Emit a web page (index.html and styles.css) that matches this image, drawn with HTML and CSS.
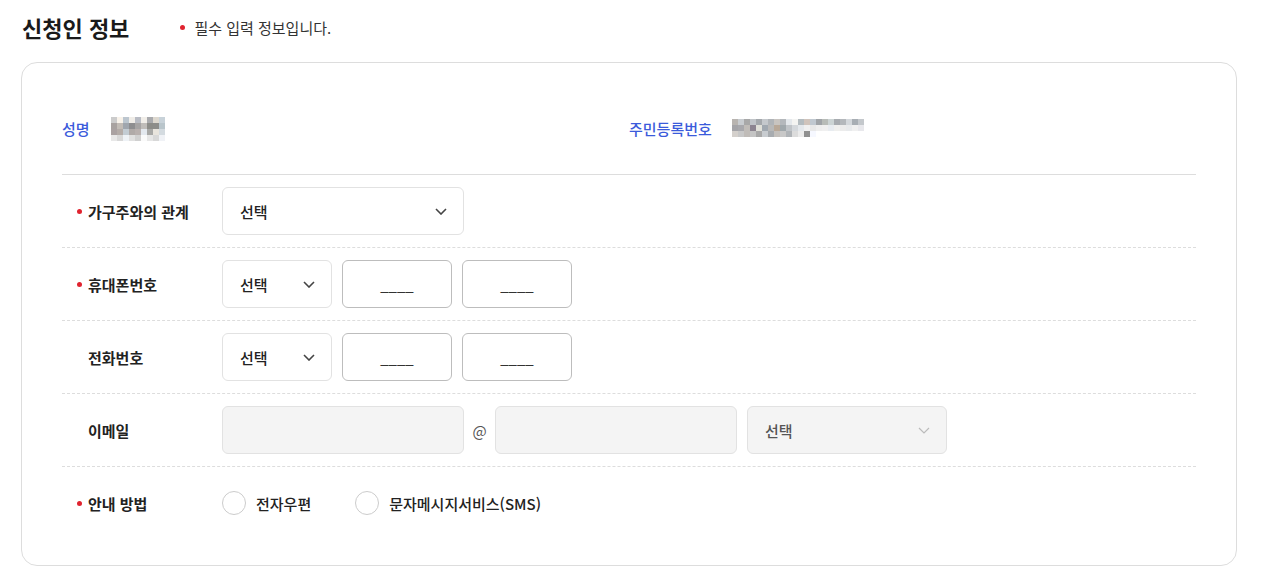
FILE: index.html
```html
<!DOCTYPE html>
<html lang="ko">
<head>
<meta charset="utf-8">
<title>신청인 정보</title>
<link rel="stylesheet" href="styles.css">
</head>
<body>
<div class="header">
  <h2 class="title">신청인 정보</h2>
  <p class="notice"><span class="dot"></span>필수 입력 정보입니다.</p>
</div>
<div class="card">
  <div class="info-row">
    <div class="info">
      <span class="info-label name-label">성명</span>
      <svg class="mosaic" width="54" height="24" viewBox="0 0 54 24">
        <rect x="0" y="0" width="6" height="6" fill="#cccccc"/><rect x="6" y="0" width="6" height="6" fill="#f8f2ea"/><rect x="12" y="0" width="6" height="6" fill="#bcc6cf"/><rect x="18" y="0" width="6" height="6" fill="#f0ede8"/><rect x="24" y="0" width="6" height="6" fill="#b9bcc4"/><rect x="30" y="0" width="6" height="6" fill="#f1eee9"/><rect x="36" y="0" width="6" height="6" fill="#a9aaad"/><rect x="42" y="0" width="6" height="6" fill="#ddd8cf"/><rect x="48" y="0" width="6" height="6" fill="#c8d2d9"/>
        <rect x="0" y="6" width="6" height="6" fill="#a8a2a0"/><rect x="6" y="6" width="6" height="6" fill="#c2bcb6"/><rect x="12" y="6" width="6" height="6" fill="#a0a6ae"/><rect x="18" y="6" width="6" height="6" fill="#8e8e90"/><rect x="24" y="6" width="6" height="6" fill="#a6a4a4"/><rect x="30" y="6" width="6" height="6" fill="#bfbcb9"/><rect x="36" y="6" width="6" height="6" fill="#8c8c88"/><rect x="42" y="6" width="6" height="6" fill="#8d8d8a"/><rect x="48" y="6" width="6" height="6" fill="#b9c5cb"/>
        <rect x="0" y="12" width="6" height="6" fill="#aaa2a2"/><rect x="6" y="12" width="6" height="6" fill="#b4aca8"/><rect x="12" y="12" width="6" height="6" fill="#c3ccd3"/><rect x="18" y="12" width="6" height="6" fill="#b0aaa8"/><rect x="24" y="12" width="6" height="6" fill="#b8b0ae"/><rect x="30" y="12" width="6" height="6" fill="#e3e8ee"/><rect x="36" y="12" width="6" height="6" fill="#a8a8a6"/><rect x="42" y="12" width="6" height="6" fill="#e8e4dd"/><rect x="48" y="12" width="6" height="6" fill="#d4dbe0"/>
        <rect x="0" y="18" width="6" height="6" fill="#e8e8e8"/><rect x="6" y="18" width="6" height="6" fill="#d8d8d8"/><rect x="12" y="18" width="6" height="6" fill="#eef2f6"/><rect x="18" y="18" width="6" height="6" fill="#e0e0e0"/><rect x="24" y="18" width="6" height="6" fill="#d0d0d0"/><rect x="30" y="18" width="6" height="6" fill="#fafafa"/><rect x="36" y="18" width="6" height="6" fill="#e6e6e6"/><rect x="42" y="18" width="6" height="6" fill="#d8d8d8"/><rect x="48" y="18" width="6" height="6" fill="#f0f2f6"/>
      </svg>
    </div>
    <div class="info">
      <span class="info-label">주민등록번호</span>
      <svg class="mosaic mosaic-ssn" width="132" height="18" viewBox="0 0 132 18">
        <rect x="0" y="0" width="6" height="6" fill="#b8b4b0"/><rect x="6" y="0" width="6" height="6" fill="#c8ccd0"/><rect x="12" y="0" width="6" height="6" fill="#a8a8a8"/><rect x="18" y="0" width="6" height="6" fill="#c0c4c8"/><rect x="24" y="0" width="6" height="6" fill="#a4a8ac"/><rect x="30" y="0" width="6" height="6" fill="#c4c8cc"/><rect x="36" y="0" width="6" height="6" fill="#b0b4b8"/><rect x="42" y="0" width="6" height="6" fill="#c8c4c0"/><rect x="48" y="0" width="6" height="6" fill="#b4b8bc"/><rect x="54" y="0" width="6" height="6" fill="#e4e8ec"/><rect x="60" y="0" width="6" height="6" fill="#f4f4f2"/><rect x="66" y="0" width="6" height="6" fill="#b4bcc0"/><rect x="72" y="0" width="6" height="6" fill="#d0c4bc"/><rect x="78" y="0" width="6" height="6" fill="#c0c8d0"/><rect x="84" y="0" width="6" height="6" fill="#a0a4a8"/><rect x="90" y="0" width="6" height="6" fill="#b8bcb8"/><rect x="96" y="0" width="6" height="6" fill="#ccd4d4"/><rect x="102" y="0" width="6" height="6" fill="#a8acb0"/><rect x="108" y="0" width="6" height="6" fill="#b4b8bc"/><rect x="114" y="0" width="6" height="6" fill="#d4d8dc"/><rect x="120" y="0" width="6" height="6" fill="#a8aeb4"/><rect x="126" y="0" width="6" height="6" fill="#c4c8cc"/>
        <rect x="0" y="6" width="6" height="6" fill="#a4a4a8"/><rect x="6" y="6" width="6" height="6" fill="#a8a8ac"/><rect x="12" y="6" width="6" height="6" fill="#c0bcb8"/><rect x="18" y="6" width="6" height="6" fill="#8c8490"/><rect x="24" y="6" width="6" height="6" fill="#e0e0d8"/><rect x="30" y="6" width="6" height="6" fill="#a0a8b0"/><rect x="36" y="6" width="6" height="6" fill="#b8b8b8"/><rect x="42" y="6" width="6" height="6" fill="#b8a898"/><rect x="48" y="6" width="6" height="6" fill="#a0a8ac"/><rect x="54" y="6" width="6" height="6" fill="#c0c4c8"/><rect x="60" y="6" width="6" height="6" fill="#d4d8dc"/><rect x="66" y="6" width="6" height="6" fill="#e4e8ec"/><rect x="72" y="6" width="6" height="6" fill="#f0f0f0"/><rect x="78" y="6" width="6" height="6" fill="#e8e8e8"/><rect x="84" y="6" width="6" height="6" fill="#eeeeee"/><rect x="90" y="6" width="6" height="6" fill="#f0f0f0"/><rect x="96" y="6" width="6" height="6" fill="#e8ecf0"/><rect x="102" y="6" width="6" height="6" fill="#f0f0ee"/><rect x="108" y="6" width="6" height="6" fill="#ececec"/><rect x="114" y="6" width="6" height="6" fill="#e8eaec"/><rect x="120" y="6" width="6" height="6" fill="#f0f0f0"/><rect x="126" y="6" width="6" height="6" fill="#e8e8ec"/>
        <rect x="0" y="12" width="6" height="6" fill="#d4d0cc"/><rect x="6" y="12" width="6" height="6" fill="#c8c8c8"/><rect x="12" y="12" width="6" height="6" fill="#c0bcb8"/><rect x="18" y="12" width="6" height="6" fill="#c4c4c4"/><rect x="24" y="12" width="6" height="6" fill="#a8a8a8"/><rect x="30" y="12" width="6" height="6" fill="#c8ccd0"/><rect x="36" y="12" width="6" height="6" fill="#a8acb0"/><rect x="42" y="12" width="6" height="6" fill="#c4c0bc"/><rect x="48" y="12" width="6" height="6" fill="#c8c8c8"/><rect x="54" y="12" width="6" height="6" fill="#b0b4b8"/><rect x="60" y="12" width="6" height="6" fill="#dcdcdc"/><rect x="66" y="12" width="6" height="6" fill="#ececec"/><rect x="72" y="12" width="6" height="6" fill="#909090"/><rect x="78" y="12" width="6" height="6" fill="#f6f8ff"/>
      </svg>
    </div>
  </div>

  <div class="row">
    <div class="label req">가구주와의 관계</div>
    <div class="fields">
      <div class="select wide"><span>선택</span><svg class="chev" width="12" height="7" viewBox="0 0 12 7"><polyline points="1,1 6,6 11,1" fill="none" stroke="#444" stroke-width="1.6"/></svg></div>
    </div>
  </div>

  <div class="row">
    <div class="label req">휴대폰번호</div>
    <div class="fields">
      <div class="select small"><span>선택</span><svg class="chev" width="12" height="7" viewBox="0 0 12 7"><polyline points="1,1 6,6 11,1" fill="none" stroke="#444" stroke-width="1.6"/></svg></div>
      <div class="input small">____</div>
      <div class="input small">____</div>
    </div>
  </div>

  <div class="row">
    <div class="label">전화번호</div>
    <div class="fields">
      <div class="select small"><span>선택</span><svg class="chev" width="12" height="7" viewBox="0 0 12 7"><polyline points="1,1 6,6 11,1" fill="none" stroke="#444" stroke-width="1.6"/></svg></div>
      <div class="input small">____</div>
      <div class="input small">____</div>
    </div>
  </div>

  <div class="row">
    <div class="label">이메일</div>
    <div class="fields">
      <div class="input wide disabled"></div>
      <span class="at">@</span>
      <div class="input wide disabled"></div>
      <div class="select email disabled"><span>선택</span><svg class="chev" width="12" height="7" viewBox="0 0 12 7"><polyline points="1,1 6,6 11,1" fill="none" stroke="#bbb" stroke-width="1.2"/></svg></div>
    </div>
  </div>

  <div class="row last">
    <div class="label req">안내 방법</div>
    <div class="fields radios">
      <label class="radio"><span class="circle"></span>전자우편</label>
      <label class="radio"><span class="circle"></span>문자메시지서비스(SMS)</label>
    </div>
  </div>
</div>
</body>
</html>
```

FILE: styles.css
```css
* { box-sizing: border-box; }
body {
  margin: 0;
  font-family: "Noto Sans CJK KR", "Noto Sans", sans-serif;
  color: #222;
  background: #fff;
}
.header {
  display: flex;
  align-items: center;
  height: 30px;
  margin: 12px 0 20px 22px;
}
.title {
  margin: 0;
  font-size: 22px;
  font-weight: 700;
  line-height: 30px;
  color: #1a1a1a;
}
.notice {
  margin: 0 0 0 51px;
  font-size: 15px;
  color: #333;
  display: flex;
  align-items: center;
}
.notice .dot {
  width: 5px;
  height: 5px;
  border-radius: 50%;
  background: #e0232f;
  margin-right: 9px;
}
.card {
  margin: 0 30px 0 21px;
  border: 1px solid #ddd;
  border-radius: 16px;
  padding: 0 40px 26px;
}
.info-row {
  display: grid;
  grid-template-columns: 1fr 1fr;
  padding: 42px 0 21px;
  border-bottom: 1px solid #ddd;
}
.info {
  display: flex;
  align-items: center;
  height: 48px;
}
.info-label {
  font-size: 15px;
  font-weight: 500;
  color: #3b5bdb;
  margin-right: 20px;
  position: relative;
  top: -1px;
}
.name-label { margin-right: 21px; }
.mosaic { display: block; }
.mosaic-ssn { margin-top: -3px; }
.row {
  display: flex;
  align-items: center;
  padding: 12px 0;
  border-bottom: 1px dashed #ddd;
}
.row.last { border-bottom: none; }
.label {
  width: 160px;
  flex: none;
  padding-left: 26px;
  font-size: 15px;
  font-weight: 700;
  color: #222;
}
.label.req::before {
  content: "";
  display: inline-block;
  width: 5px;
  height: 5px;
  border-radius: 50%;
  background: #e0232f;
  margin-left: -11px;
  margin-right: 6px;
  vertical-align: middle;
  position: relative;
  top: -2px;
}
.fields {
  display: flex;
  align-items: center;
  gap: 10px;
  height: 48px;
}
.select, .input {
  height: 48px;
  border-radius: 6px;
  font-size: 15px;
  font-weight: 500;
  color: #222;
}
.select {
  display: flex;
  align-items: center;
  justify-content: space-between;
  padding: 0 16px 0 17px;
  border: 1px solid #e2e2e2;
  background: #fff;
}
.input {
  display: flex;
  align-items: center;
  justify-content: center;
  border: 1px solid #bdbdbd;
  background: #fff;
  color: #333;
  font-weight: 400;
}
.wide { width: 242px; }
.small { width: 110px; }
.email { width: 200px; }
.disabled {
  background: #f4f4f4;
  border-color: #e2e2e2;
  color: #555;
}
.chev { display: block; }
.at {
  width: 31px;
  margin: 0 -10px;
  text-align: center;
  font-size: 15px;
  color: #555;
}
.radios { gap: 0; }
.radio {
  display: flex;
  align-items: center;
  gap: 10px;
  font-size: 15px;
  font-weight: 500;
  color: #222;
  margin-right: 44px;
}
.circle {
  width: 24px;
  height: 24px;
  border: 1px solid #ccc;
  border-radius: 50%;
  background: #fff;
}
```
